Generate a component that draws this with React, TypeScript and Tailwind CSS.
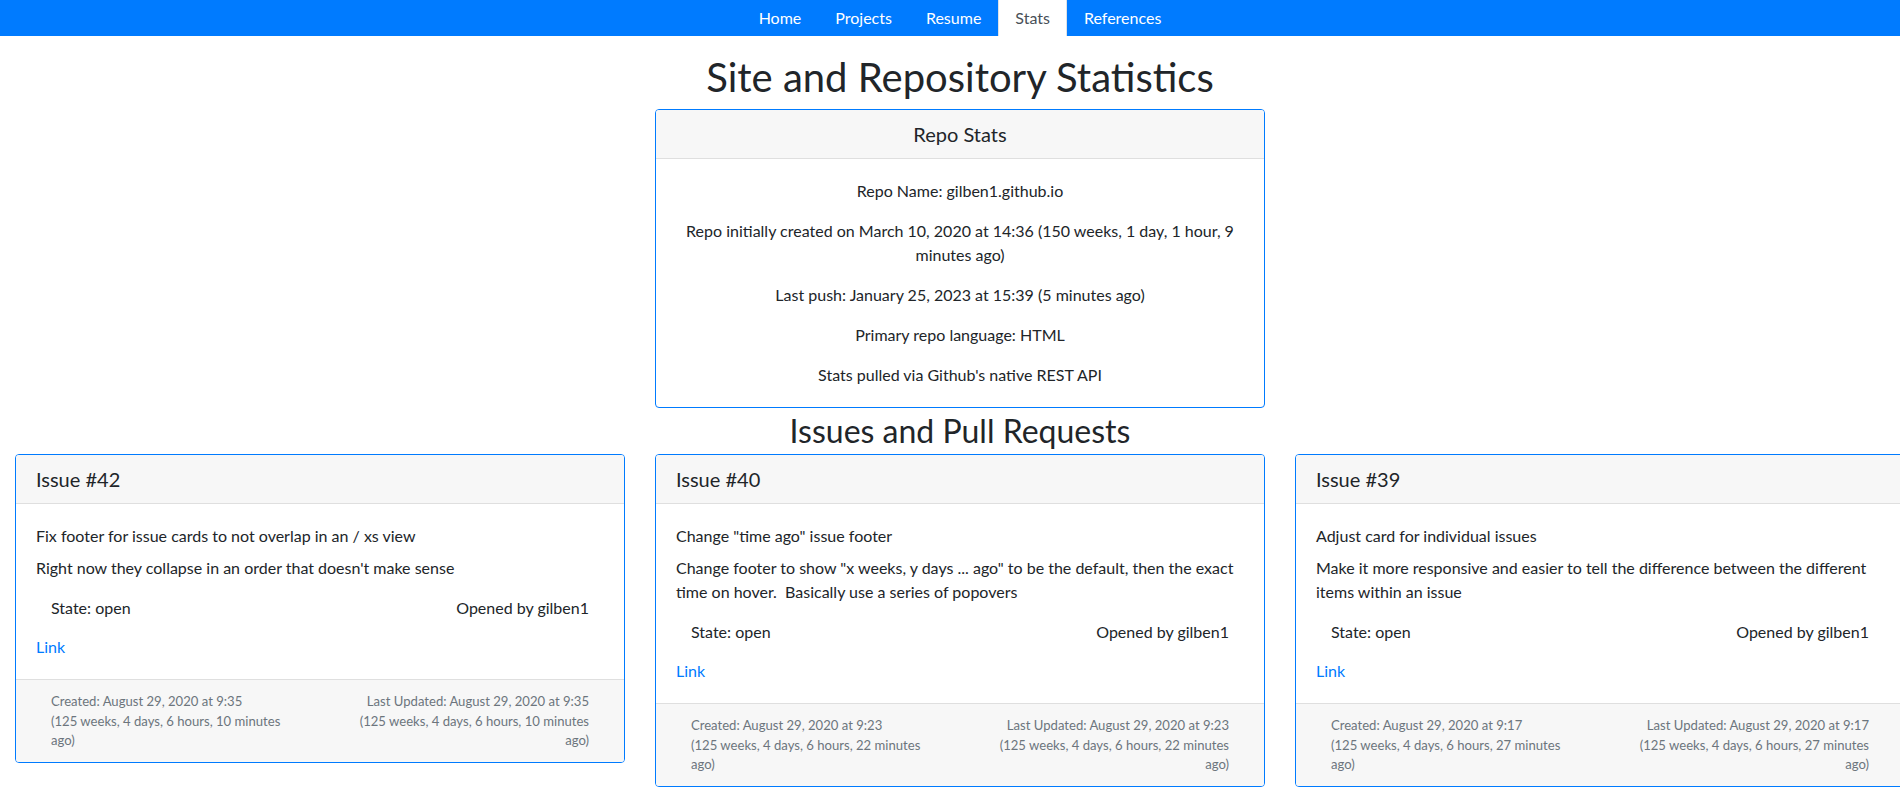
import React from "react";

type Issue = {
  num: number;
  title: string;
  body: string;
  time: string;
  mins: number;
};

const issues: Issue[] = [
  {
    num: 42,
    title: "Fix footer for issue cards to not overlap in an / xs view",
    body: "Right now they collapse in an order that doesn't make sense",
    time: "9:35",
    mins: 10,
  },
  {
    num: 40,
    title: 'Change "time ago" issue footer',
    body: 'Change footer to show "x weeks, y days ... ago" to be the default, then the exact time on hover.\u00a0 Basically use a series of popovers',
    time: "9:23",
    mins: 22,
  },
  {
    num: 39,
    title: "Adjust card for individual issues",
    body: "Make it more responsive and easier to tell the difference between the different items within an issue",
    time: "9:17",
    mins: 27,
  },
];

function NavLink({ label, active }: { label: string; active?: boolean }) {
  if (active) {
    return (
      <span className="h-[36px] flex items-center px-4 border-x border-[#dee2e6] bg-white text-[#495057]">
        {label}
      </span>
    );
  }
  return (
    <span className="h-[36px] flex items-center px-4 border-x border-transparent text-white">{label}</span>
  );
}

function IssueCard({ issue }: { issue: Issue }) {
  const ago = (
    <>
      (125 weeks, 4 days, 6 hours, {issue.mins} minutes
      <br />
      ago)
    </>
  );
  return (
    <div className="border border-[#007bff] rounded">
      <div className="bg-[#f7f7f7] border-b border-[#dfdfdf] px-5 py-3 text-[20px] leading-[24px] rounded-t-[3px]">
        Issue #{issue.num}
      </div>
      <div className="p-5">
        <p className="mb-2">{issue.title}</p>
        <p className="mb-4">{issue.body}</p>
        <div className="flex mb-[15px]">
          <div className="w-1/2 px-[15px]">State: open</div>
          <div className="w-1/2 px-[15px] text-right">Opened by gilben1</div>
        </div>
        <a className="text-[#007bff]">Link</a>
      </div>
      <div className="bg-[#f7f7f7] border-t border-[#dfdfdf] px-5 py-3 flex text-[13.1px] leading-[19.2px] text-[#6c757d] rounded-b-[3px]">
        <div className="w-1/2 px-[15px]">
          <div>Created: August 29, 2020 at {issue.time}</div>
          <div>{ago}</div>
        </div>
        <div className="w-1/2 px-[15px] text-right">
          <div>Last Updated: August 29, 2020 at {issue.time}</div>
          <div>{ago}</div>
        </div>
      </div>
    </div>
  );
}

export default function App() {
  return (
    <div className="relative w-[1900px] h-[810px] overflow-hidden bg-white text-[#212529] text-[16px] leading-[24px] font-['Lato',sans-serif]">
      <div className="w-[1920px]">
        <nav className="bg-[#007bff] h-[36px] flex justify-center">
          <NavLink label="Home" />
          <NavLink label="Projects" />
          <NavLink label="Resume" />
          <NavLink label="Stats" active />
          <NavLink label="References" />
        </nav>
        <h1 className="text-center text-[40px] leading-[48px] font-normal mt-[17px] mb-2">
          Site and Repository Statistics
        </h1>
        <div className="flex justify-center">
          <div className="w-[610px] border border-[#007bff] rounded">
            <div className="bg-[#f7f7f7] border-b border-[#dfdfdf] px-5 py-3 text-[20px] leading-[24px] text-center rounded-t-[3px]">
              Repo Stats
            </div>
            <div className="p-5 text-center">
              <p className="mb-4">Repo Name: gilben1.github.io</p>
              <p className="mb-4">
                Repo initially created on March 10, 2020 at 14:36 (150 weeks, 1 day, 1 hour, 9 minutes ago)
              </p>
              <p className="mb-4">Last push: January 25, 2023 at 15:39 (5 minutes ago)</p>
              <p className="mb-4">Primary repo language: HTML</p>
              <p>Stats pulled via Github's native REST API</p>
            </div>
          </div>
        </div>
        <h2 className="text-center text-[32px] leading-[38.4px] font-normal mt-[4px] mb-[4px]">
          Issues and Pull Requests
        </h2>
        <div className="flex items-start">
          {issues.map((i) => (
            <div key={i.num} className="w-[640px] shrink-0 px-[15px]">
              <IssueCard issue={i} />
            </div>
          ))}
        </div>
      </div>
    </div>
  );
}
